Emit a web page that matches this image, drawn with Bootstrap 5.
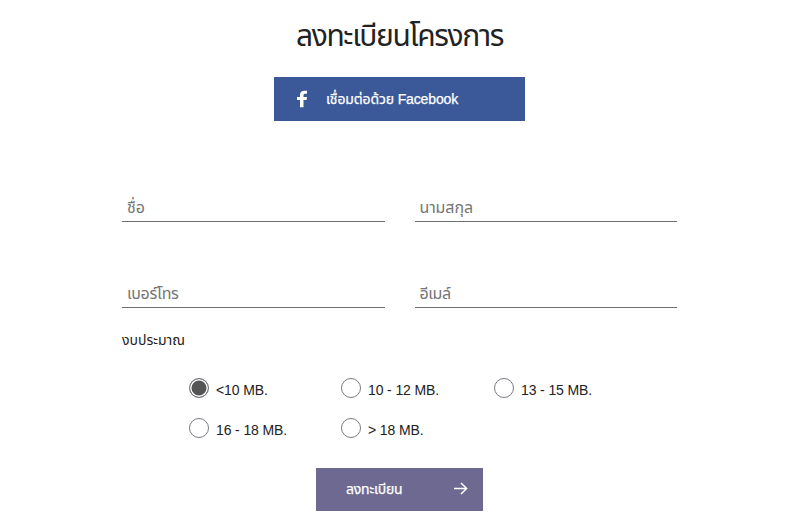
<!DOCTYPE html>
<html lang="th">
<head>
<meta charset="utf-8">
<meta name="viewport" content="width=device-width, initial-scale=1">
<title>ลงทะเบียนโครงการ</title>
<link href="https://cdn.jsdelivr.net/npm/bootstrap@5.3.0/dist/css/bootstrap.min.css" rel="stylesheet">
<style>
body{font-family:"Liberation Sans","Noto Sans Thai",sans-serif;font-size:14px;color:#222;background:#fff}
.signup{width:585px;margin-left:107px;padding-top:14px}
.signup .row{--bs-gutter-x:30px}
.page-title{font-size:30px;line-height:44px;height:44px;margin:0 0 19px;letter-spacing:-1.35px}
.btn-fb{width:251px;height:44px;margin-left:167px;background:#3b5998;border-radius:0;color:#fff;font-size:14px;letter-spacing:-.13px;padding:0 0 0 22px}
.btn-label{-webkit-text-stroke:.25px #fff}
.btn-fb svg{margin-right:17px}
.line-input{height:29px;border:0;border-bottom:1px solid #6d6e72;border-radius:0;padding:2px 5px 0;font-size:16px;line-height:26px;background:transparent}
.line-input::placeholder{color:#757575;opacity:1}
.line-input[name=phone]{letter-spacing:-.3px}
.line-input[name=email]{letter-spacing:-.4px}
.line-input[name=surname]{letter-spacing:-.1px}
.line-input[name=firstname]{letter-spacing:-.1px}
.fields{padding-top:72px;row-gap:57px}
.budget-label{height:22px;line-height:22px;margin:21px 0 27px 15px}
.budget{width:458px;margin-left:82px;display:grid;grid-template-columns:152px 153px 153px;grid-auto-rows:20px;row-gap:20px}
.budget label{height:20px;line-height:24px;white-space:nowrap;letter-spacing:-.12px}
.budget input{appearance:none;width:20px;height:20px;border:1px solid #777b80;border-radius:50%;margin:0 7px 0 0;flex:none;background:#fff}
.budget input:checked{background:#555;box-shadow:inset 0 0 0 1.5px #fff}
.btn-send{width:167px;height:43px;margin:30px 0 0 209px;background:#6e6990;border-radius:0;color:#fff;font-size:14px;letter-spacing:-.2px;padding:0 15px 0 30px}
.btn-send svg{margin-top:-1px}
</style>
</head>
<body>
<main class="signup">
<h1 class="page-title text-center fw-normal">ลงทะเบียนโครงการ</h1>
<button type="button" class="btn btn-fb d-flex align-items-center border-0">
<svg width="13" height="18" viewBox="0 0 13 18" fill="#fff" aria-hidden="true"><path d="M4 17.3V10H1V7h3V4.8C4 2 5.700.7 8.500.7H11v3H9.300C8 3.700 7.500 4.200 7.500 5.200V7H11l-.4 3H7.500v7.300z"/></svg>
<span class="btn-label">เชื่อมต่อด้วย Facebook</span>
</button>
<form>
<div class="px-3-form">
<div class="row mx-0 fields">
<div class="col-6"><input class="form-control line-input" name="firstname" placeholder="ชื่อ" aria-label="ชื่อ"></div>
<div class="col-6"><input class="form-control line-input" name="surname" placeholder="นามสกุล" aria-label="นามสกุล"></div>
<div class="col-6"><input class="form-control line-input" name="phone" placeholder="เบอร์โทร" aria-label="เบอร์โทร"></div>
<div class="col-6"><input class="form-control line-input" name="email" placeholder="อีเมล์" aria-label="อีเมล์"></div>
</div>
</div>
<div class="budget-label">งบประมาณ</div>
<div class="budget">
<label class="d-flex"><input type="radio" name="budget" checked>&lt;10 MB.</label>
<label class="d-flex"><input type="radio" name="budget">10 - 12 MB.</label>
<label class="d-flex"><input type="radio" name="budget">13 - 15 MB.</label>
<label class="d-flex"><input type="radio" name="budget">16 - 18 MB.</label>
<label class="d-flex"><input type="radio" name="budget">&gt; 18 MB.</label>
</div>
<button type="button" class="btn btn-send d-flex align-items-center justify-content-between border-0">
<span class="btn-label">ลงทะเบียน</span>
<svg width="14" height="14" viewBox="0 0 14 14" fill="none" stroke="#fff" stroke-width="1.500" aria-hidden="true"><path d="M0 6.500h12.500M7 1l5.600 5.500L7 12"/></svg>
</button>
</form>
</main>
<script src="https://cdn.jsdelivr.net/npm/bootstrap@5.3.0/dist/js/bootstrap.bundle.min.js"></script>
</body>
</html>
